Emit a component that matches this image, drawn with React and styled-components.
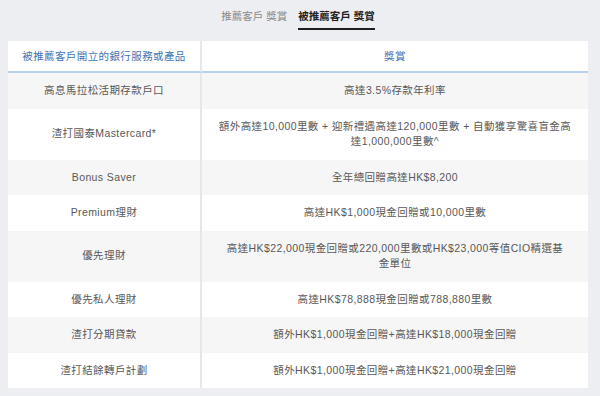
import React from "react";
import styled, { createGlobalStyle } from "styled-components";

const GlobalStyle = createGlobalStyle`
	html, body {
		margin: 0;
		padding: 0;
		background: #eceef2;
	}
	body {
		font-family: "Liberation Sans", "Noto Sans CJK TC", sans-serif;
		-webkit-font-smoothing: antialiased;
	}
`;

const Page = styled.div`
	width: 580px;
	margin-left: 8px;
`;

const Tabs = styled.div`
	display: flex;
	justify-content: center;
	gap: 11px;
	margin-bottom: 11px;
`;

const Tab = styled.div`
	padding: 8px 0 4px;
	font-size: 10.5px;
	line-height: 16px;
	color: ${(p) => (p.active ? "#222" : "#8a8a8a")};
	font-weight: ${(p) => (p.active ? 700 : 400)};
	border-bottom: 2px solid ${(p) => (p.active ? "#1f1f1f" : "transparent")};
`;

const Table = styled.div`
	display: grid;
	grid-template-columns: 194px 386px;
	background: #fff;
`;

const Row = styled.div`
	display: contents;
`;

const HeadCell = styled.div`
	display: flex;
	align-items: center;
	justify-content: center;
	padding: 7px 8px;
	line-height: 16px;
	font-size: 10.5px;
	letter-spacing: 0.4px;
	color: #3b74b6;
	background: #fff;
	border-bottom: 2px solid #b7d1ee;
	border-right: ${(p) => (p.first ? "2px solid #e7e7e9" : "none")};
	white-space: nowrap;
`;

const Cell = styled.div`
	display: flex;
	align-items: center;
	justify-content: center;
	text-align: center;
	white-space: pre-line;
	padding: 10px 8px;
	line-height: 15.5px;
	font-size: 10.5px;
	letter-spacing: 0.4px;
	color: #585858;
	background: ${(p) => (p.shaded ? "#f6f6f7" : "#fff")};
	border-right: ${(p) => (p.first ? "2px solid #e7e7e9" : "none")};
`;

const rows = [
	["高息馬拉松活期存款戶口", "高達3.5%存款年利率"],
	["渣打國泰Mastercard*", "額外高達10,000里數 + 迎新禮遇高達120,000里數 + 自動獲享驚喜盲金高\n達1,000,000里數^"],
	["Bonus Saver", "全年總回贈高達HK$8,200"],
	["Premium理財", "高達HK$1,000現金回贈或10,000里數"],
	["優先理財", "高達HK$22,000現金回贈或220,000里數或HK$23,000等值CIO精選基\n金單位"],
	["優先私人理財", "高達HK$78,888現金回贈或788,880里數"],
	["渣打分期貸款", "額外HK$1,000現金回贈+高達HK$18,000現金回贈"],
	["渣打結餘轉戶計劃", "額外HK$1,000現金回贈+高達HK$21,000現金回贈"],
];

const App = () => {
	return (
		<Page>
			<GlobalStyle />
			<Tabs>
				<Tab>推薦客戶 獎賞</Tab>
				<Tab active>被推薦客戶 獎賞</Tab>
			</Tabs>
			<Table>
				<Row>
					<HeadCell first>被推薦客戶開立的銀行服務或產品</HeadCell>
					<HeadCell>獎賞</HeadCell>
				</Row>
				{rows.map(([product, reward], i) => (
					<Row key={product}>
						<Cell first shaded={i % 2 === 0}>
							{product}
						</Cell>
						<Cell shaded={i % 2 === 0}>{reward}</Cell>
					</Row>
				))}
			</Table>
		</Page>
	);
};

export default App;
